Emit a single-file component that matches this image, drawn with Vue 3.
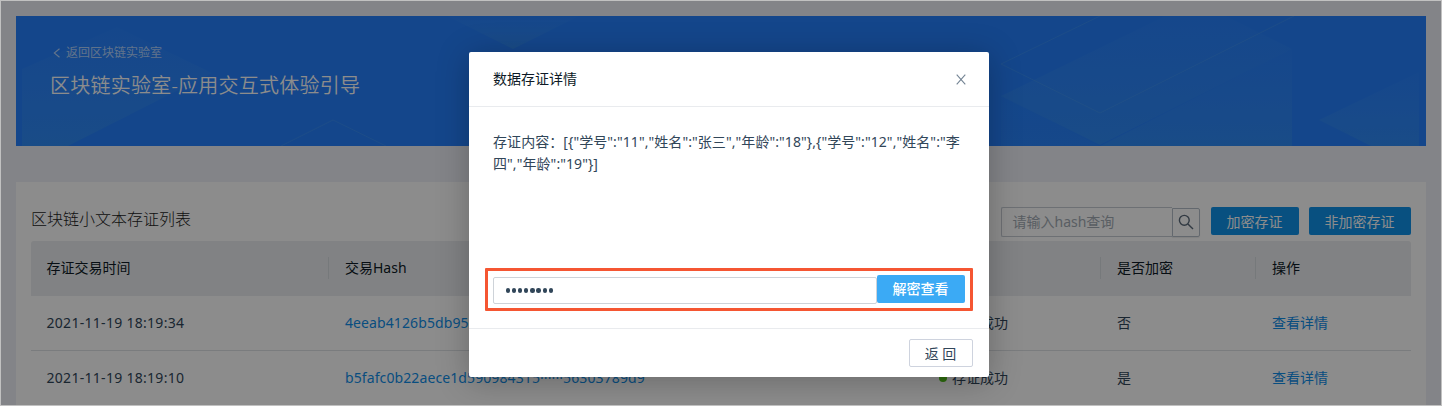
<script setup>
const headers = ['存证交易时间', '交易Hash', '状态', '是否加密', '操作']
const rows = [
  { time: '2021-11-19 18:19:34', hash: '4eeab4126b5db95c27e081a6f······1c94a02b7e', status: '存证成功', enc: '否' },
  { time: '2021-11-19 18:19:10', hash: 'b5fafc0b22aece1d590984315······56303789d9', status: '存证成功', enc: '是' },
]
const content = '存证内容：[{"学号":"11","姓名":"张三","年龄":"18"},{"学号":"12","姓名":"李四","年龄":"19"}]'
</script>

<template>
  <div class="app">
    <div class="page">
      <section class="banner">
        <svg class="deco" width="1410" height="130" viewBox="16 16 1410 130">
          <defs>
            <linearGradient id="fade" x1="0" y1="0" x2="0" y2="1">
              <stop offset="0" stop-color="#4a9cff" stop-opacity=".05" />
              <stop offset="1" stop-color="#3f9ce8" stop-opacity=".36" />
            </linearGradient>
          </defs>
          <g fill="url(#fade)">
            <path d="M22 69L117 27L212 73L68 146H22Z" />
            <path d="M447 16L513 49L579 16Z" />
            <path d="M1001 96L1165 16H1226L1292 49L1100 145Z" />
            <path d="M1100 146L1292 49V146Z" />
            <path d="M1001 96V146H1100Z" opacity=".3" />
            <path d="M1319 120L1419 72V146H1371Z" />
          </g>
          <g fill="none" stroke="#4a9af0" stroke-opacity=".42">
            <path d="M281 146L333 120L386 146" />
            <path d="M1100 16L1001 64L1100 113L1294 16" />
          </g>
        </svg>
        <a class="back">
          <svg width="8" height="10" viewBox="0 0 8 10"><path d="M6.5 .8L1.3 5L6.5 9.2" /></svg>
          <span>返回区块链实验室</span>
        </a>
        <h1>区块链实验室-应用交互式体验引导</h1>
      </section>
      <section class="card">
        <div class="toolbar">
          <h2>区块链小文本存证列表</h2>
          <div class="tools">
            <div class="search">
              <div class="query">请输入hash查询</div>
              <div class="go">
                <svg width="16" height="16" viewBox="0 0 16 16"><circle cx="6.3" cy="6.3" r="4.9" /><path d="M9.9 9.9L15 15" /></svg>
              </div>
            </div>
            <button class="primary">加密存证</button>
            <button class="primary wide">非加密存证</button>
          </div>
        </div>
        <div class="row head">
          <div v-for="h in headers" :key="h" class="cell">{{ h }}</div>
        </div>
        <div v-for="r in rows" :key="r.time" class="row">
          <div class="cell time">{{ r.time }}</div>
          <div class="cell link hash">{{ r.hash }}</div>
          <div class="cell status"><i></i>{{ r.status }}</div>
          <div class="cell">{{ r.enc }}</div>
          <div class="cell link">查看详情</div>
        </div>
      </section>
    </div>
    <div class="mask">
      <div class="modal">
        <header>
          <span>数据存证详情</span>
          <svg width="10" height="11" viewBox="0 0 10 11"><path d="M.7 .7L9.3 10.3M9.3 .7L.7 10.3" /></svg>
        </header>
        <div class="body">
          <p>{{ content }}</p>
          <div class="frame">
            <div class="pwd"><b v-for="n in 8" :key="n"></b></div>
            <button class="decrypt">解密查看</button>
          </div>
        </div>
        <footer><button class="ret">返 回</button></footer>
      </div>
    </div>
    <div class="edge"></div>
  </div>
</template>

<style>
body { overflow: hidden; }
</style>

<style scoped>
* { box-sizing: border-box; }
.app {
  position: relative; width: 1442px; height: 406px; overflow: hidden;
  font-family: "Noto Sans", "Noto Sans CJK SC", sans-serif; font-size: 14px; color: #314659;
}
.page { height: 406px; padding: 16px; background: #eff1f7; display: flex; flex-direction: column; gap: 36px; }
.banner { position: relative; flex: none; height: 130px; padding: 28px 34px; background: #2580fd; display: flex; flex-direction: column; }
.deco { position: absolute; left: 0; top: 0; }
.back { position: relative; display: flex; align-items: center; gap: 5px; height: 18px; padding-left: 3px; font-size: 12px; line-height: 18px; color: rgba(255, 255, 255, .65); white-space: nowrap; }
.back svg { fill: none; stroke: currentColor; stroke-width: 1.1; }
h1 { position: relative; margin: 9px 0 0; font-size: 20px; line-height: 30px; font-weight: 350; color: #fff; letter-spacing: .23px; }
.card { flex: none; height: 240px; padding: 24px 15px 0; background: #fff; }
.toolbar { height: 35px; display: flex; justify-content: space-between; align-items: flex-start; }
h2 { margin: 0; font-size: 16px; line-height: 26px; font-weight: 300; color: #222; }
.tools { display: flex; gap: 10px; padding-top: 1px; }
.search { display: flex; align-items: flex-start; width: 200px; }
.query { width: 171px; height: 30px; border: 1px solid #c6ccd4; border-right: 0; border-radius: 2px 0 0 2px; padding-left: 10.5px; line-height: 28px; color: #a3abb4; }
.go { width: 28px; height: 29px; margin-top: 1px; border: 1px solid #b5bec8; border-radius: 0 2px 2px 0; display: flex; align-items: center; justify-content: center; box-shadow: 0 1px 1px rgba(0, 0, 0, .08); }
.go svg { fill: none; stroke: #5c6b7b; stroke-width: 1.4; margin-top: -2px; }
button { font: inherit; margin: 0; padding: 0; border: 0; border-radius: 2px; white-space: nowrap; }
.primary { width: 88px; height: 28px; line-height: 27px; background: #0f93ea; color: #fff; padding-right: 1px; }
.wide { width: 102px; }
.row { display: grid; grid-template-columns: 298px 593px 179px 155px 155px; height: 55px; border-bottom: 1px solid #dfe2e6; }
.cell { position: relative; padding-left: 16px; line-height: 54px; white-space: nowrap; }
.cell:first-child { padding-left: 15.5px; }
.head { background: #ebedf0; color: #0d1a26; border-bottom: 0; border-radius: 3px 3px 0 0; }
.head .cell + .cell::before { content: ""; position: absolute; left: -1px; top: 16px; width: 1px; height: 22px; background: #d8dce1; }
.link { color: #108ee9; }
.time { letter-spacing: .29px; }
.hash { letter-spacing: .1px; }
.status { display: flex; align-items: center; gap: 5px; }
.status i { width: 8px; height: 8px; border-radius: 50%; background: #52c41a; margin-left: 1px; }
.mask { position: absolute; inset: 0; background: rgba(0, 0, 0, .45); padding-top: 52px; }
.modal { width: 520px; height: 325px; margin-left: 469px; background: #fff; border-radius: 2px; box-shadow: 0 4px 32px rgba(0, 0, 0, .25); display: flex; flex-direction: column; }
header { height: 55px; flex: none; border-bottom: 1px solid #e9ebee; padding: 0 23px 2px 24px; display: flex; align-items: center; justify-content: space-between; color: #0d1a26; }
header svg { fill: none; stroke: #748494; stroke-width: 1.1; margin-top: 3px; }
.body { height: 221px; padding: 24px 16px 0; }
p { margin: 0 8px; height: 137px; line-height: 22px; letter-spacing: .07px; }
.frame { width: 488px; height: 43px; border: 3px solid #f55632; border-radius: 1px; padding: 4px 5px; display: flex; align-items: flex-start; }
.pwd { width: 384px; height: 27px; margin-top: 2px; border: 1px solid #ced3d9; border-radius: 2px; display: flex; align-items: center; gap: 1.8px; padding-left: 11.5px; }
.pwd b { width: 4.4px; height: 4.4px; border-radius: 50%; background: #314659; }
.decrypt { width: 88px; height: 28px; line-height: 28px; background: #3baaf5; color: #fff; font-weight: 500; padding-right: 1px; }
footer { flex: 1; border-top: 1px solid #e9ebee; padding: 10px 16px; display: flex; justify-content: flex-end; }
.ret { width: 64px; height: 28px; line-height: 25px; border: 1px solid #ced3de; background: #fff; color: #314659; padding-right: 1px; }
.edge { position: absolute; inset: 0; border: 1px solid #c1c1c1; }
</style>
